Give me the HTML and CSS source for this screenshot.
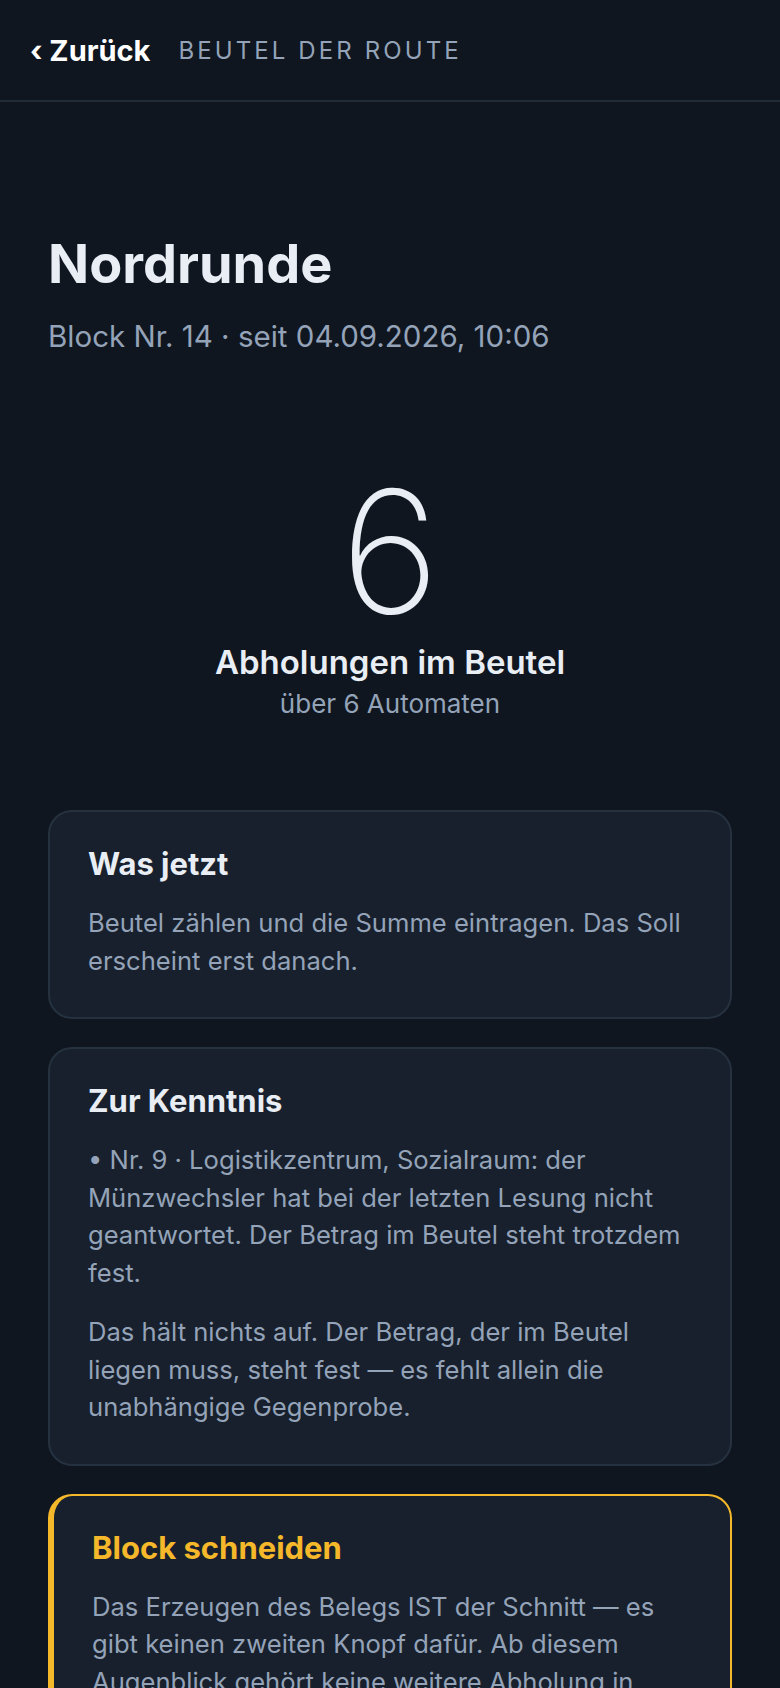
FILE: index.html
```html
<!DOCTYPE html>
<html lang="de">
<head>
    <meta charset="UTF-8">
    <meta name="viewport" content="width=device-width, initial-scale=1.0">
    <title>Beutel der Route</title>
    <link rel="stylesheet" href="styles.css">
</head>
<body>

    <!-- Top bar -->
    <header class="topbar">
        <a class="back" href="#">‹ Zurück</a>
        <span class="topbar-title">Beutel der Route</span>
    </header>

    <main class="page">
        <h1 class="route-name">Nordrunde</h1>
        <p class="route-meta">Block Nr. 14 · seit 04.09.2026, 10:06</p>

        <!-- Counter -->
        <section class="count">
            <div class="count-number">6</div>
            <div class="count-label">Abholungen im Beutel</div>
            <div class="count-sub">über 6 Automaten</div>
        </section>

        <section class="card">
            <h2 class="card-title">Was jetzt</h2>
            <p class="card-text">Beutel zählen und die Summe eintragen. Das Soll erscheint erst danach.</p>
        </section>

        <section class="card">
            <h2 class="card-title">Zur Kenntnis</h2>
            <p class="card-text">• Nr. 9 · Logistikzentrum, Sozialraum: der Münzwechsler hat bei der letzten Lesung nicht geantwortet. Der Betrag im Beutel steht trotzdem fest.</p>
            <p class="card-text">Das hält nichts auf. Der Betrag, der im Beutel liegen muss, steht fest — es fehlt allein die unabhängige Gegenprobe.</p>
        </section>

        <section class="card card-warn">
            <h2 class="card-title">Block schneiden</h2>
            <p class="card-text">Das Erzeugen des Belegs IST der Schnitt — es gibt keinen zweiten Knopf dafür. Ab diesem Augenblick gehört keine weitere Abholung in diesen Block.</p>
        </section>
    </main>

</body>
</html>
```

FILE: styles.css
```css
* {
    box-sizing: border-box;
}

body {
    margin: 0;
    font-family: Inter, "Noto Sans", sans-serif;
    background-color: #0f1620;
    color: #e9eef5;
}

.topbar {
    height: 102px;
    display: flex;
    align-items: center;
    gap: 28px;
    padding: 0 30px;
    border-bottom: 2px solid #222c38;
}

.back {
    font-size: 29px;
    font-weight: 700;
    color: #ffffff;
    text-decoration: none;
}

.topbar-title {
    font-size: 24px;
    letter-spacing: 3.1px;
    text-transform: uppercase;
    color: #94a3b8;
}

.page {
    padding: 128px 48px 48px;
}

.route-name {
    margin: 0;
    font-size: 54px;
    font-weight: 700;
    line-height: 68px;
}

.route-meta {
    margin: 18px 0 0;
    font-size: 29.5px;
    line-height: 40px;
    color: #94a3b8;
}

.count {
    margin: 110px 0 88px;
    text-align: center;
}

.count-number {
    font-size: 170px;
    font-weight: 200;
    line-height: 170px;
}

.count-label {
    margin-top: 5px;
    font-size: 33px;
    font-weight: 600;
    line-height: 42px;
}

.count-sub {
    margin-top: 3px;
    font-size: 26px;
    line-height: 36px;
    color: #94a3b8;
}

.card {
    margin-bottom: 28px;
    padding: 32px 38px 38px;
    border: 2px solid #263140;
    border-radius: 24px;
    background-color: #17202c;
}

.card-title {
    margin: 0 0 20px;
    font-size: 31px;
    font-weight: 700;
    line-height: 40px;
}

.card-text {
    margin: 0;
    font-size: 25.6px;
    line-height: 37.5px;
    color: #94a3b8;
}

.card-text + .card-text {
    margin-top: 22px;
}

.card-warn {
    border-color: #f5b82a;
    border-left-width: 6px;
}

.card-warn .card-title {
    color: #f5b82a;
}
```
